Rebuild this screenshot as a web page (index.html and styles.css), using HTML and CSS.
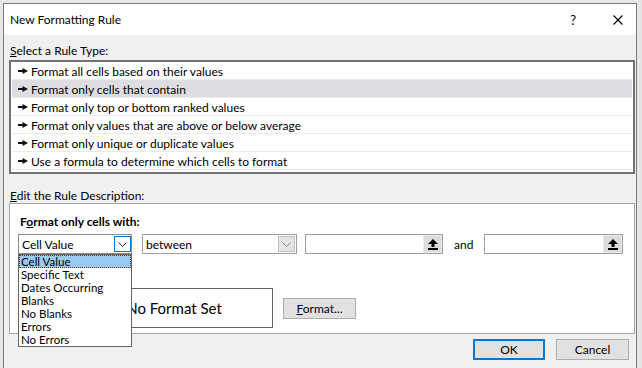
FILE: index.html
```html
<!DOCTYPE html>
<html lang="en">
<head>
  <meta charset="UTF-8" />
  <title>New Formatting Rule</title>
  <link rel="stylesheet" href="styles.css">
</head>
<body>
  <div class="dialog">
    <div class="titlebar">
      <span class="title">New Formatting Rule</span>
      <span class="help">?</span>
      <svg class="close" width="10" height="10" viewBox="0 0 10 10"><path d="M0.5 0.5l9 9M9.5 0.5l-9 9" stroke="#000" stroke-width="1.1" fill="none"/></svg>
    </div>

    <div class="content">
      <div class="label"><u>S</u>elect a Rule Type:</div>
      <ul class="rule-list">
        <li><svg class="pointer" width="10" height="6" viewBox="0 0 10 6"><path d="M0 2h5v2H0z M4.5 0l5.5 3-5.5 3z"/></svg>Format all cells based on their values</li>
        <li class="selected"><svg class="pointer" width="10" height="6" viewBox="0 0 10 6"><path d="M0 2h5v2H0z M4.5 0l5.5 3-5.5 3z"/></svg>Format only cells that contain</li>
        <li><svg class="pointer" width="10" height="6" viewBox="0 0 10 6"><path d="M0 2h5v2H0z M4.5 0l5.5 3-5.5 3z"/></svg>Format only top or bottom ranked values</li>
        <li><svg class="pointer" width="10" height="6" viewBox="0 0 10 6"><path d="M0 2h5v2H0z M4.5 0l5.5 3-5.5 3z"/></svg>Format only values that are above or below average</li>
        <li><svg class="pointer" width="10" height="6" viewBox="0 0 10 6"><path d="M0 2h5v2H0z M4.5 0l5.5 3-5.5 3z"/></svg>Format only unique or duplicate values</li>
        <li><svg class="pointer" width="10" height="6" viewBox="0 0 10 6"><path d="M0 2h5v2H0z M4.5 0l5.5 3-5.5 3z"/></svg>Use a formula to determine which cells to format</li>
      </ul>

      <div class="label edit-label"><u>E</u>dit the Rule Description:</div>
      <div class="panel">
        <div class="panel-title">F<u>o</u>rmat only cells with:</div>

        <div class="criteria">
          <div class="combo combo-field">
            <span class="combo-text">Cell Value</span>
            <span class="combo-btn focused">
              <svg width="9" height="5" viewBox="0 0 9 5"><path d="M0.5 0.5l4 4 4-4" fill="none" stroke="#333"/></svg>
            </span>
            <ul class="dropdown">
              <li class="current">Cell Value</li>
              <li>Specific Text</li>
              <li>Dates Occurring</li>
              <li>Blanks</li>
              <li>No Blanks</li>
              <li>Errors</li>
              <li>No Errors</li>
            </ul>
          </div>

          <div class="combo combo-op">
            <span class="combo-text">between</span>
            <span class="combo-btn">
              <svg width="9" height="5" viewBox="0 0 9 5"><path d="M0.5 0.5l4 4 4-4" fill="none" stroke="#8a8a8a"/></svg>
            </span>
          </div>

          <div class="ref-input">
            <span class="ref-btn">
              <svg width="10" height="11" viewBox="0 0 10 11"><path d="M5 0L10 5H6.5V8H3.5V5H0z M0 9h10v2H0z"/></svg>
            </span>
          </div>
          <span class="and">and</span>
          <div class="ref-input ref-second">
            <span class="ref-btn">
              <svg width="10" height="11" viewBox="0 0 10 11"><path d="M5 0L10 5H6.5V8H3.5V5H0z M0 9h10v2H0z"/></svg>
            </span>
          </div>
        </div>

        <div class="preview-row">
          <!-- "Preview:" label sits under the open dropdown -->
          <span class="preview-label"></span>
          <div class="preview-box">No Format Set</div>
          <button class="btn format-btn"><u>F</u>ormat...</button>
        </div>
      </div>

      <div class="actions">
        <button class="btn ok">OK</button>
        <button class="btn cancel">Cancel</button>
      </div>
    </div>
  </div>
</body>
</html>
```

FILE: styles.css
```css
body {
  margin: 0;
  background: #e6e6e6;
  font-family: 'Lato', 'Noto Sans', sans-serif;
  font-size: 12px;
  color: #000;
  overflow: hidden;
}

.dialog {
  margin: 3px 0 0 3px;
  width: 634px;
  height: 380px;
  box-sizing: border-box;
  border: 1px solid #7a7a7a;
  background: #f0f0f0;
}

.titlebar {
  height: 31px;
  display: flex;
  align-items: center;
  padding-left: 6px;
  background: #fff;
}

.title {
  flex: 1;
}

.help {
  margin-right: 37px;
  font-size: 13px;
}

.close {
  margin-right: 13px;
}

.content {
  padding: 0 1px 0 5px;
}

.label {
  line-height: 15px;
  padding-left: 1px;
  margin-top: 8px;
}

.edit-label {
  margin-top: 14px;
}

.rule-list {
  list-style: none;
  margin: 2px 0 0;
  padding: 0 1px 2px;
  border: 2px solid #737373;
  background: #fff;
}

.rule-list li {
  height: 18px;
  box-sizing: border-box;
  border-bottom: 1px solid #ebebeb;
  display: flex;
  align-items: center;
  gap: 3px;
  padding-left: 6px;
  padding-top: 1px;
}

.rule-list li.selected {
  background: #dedee2;
}

.pointer {
  fill: #111;
}

.panel {
  border: 1px solid #a3a3a3;
  background: #fff;
  padding: 10px 8px 5px;
}

.panel-title {
  font-weight: bold;
  line-height: 15px;
  padding-left: 2px;
}

.criteria {
  display: flex;
  align-items: center;
  margin-top: 5px;
  height: 20px;
}

.combo {
  position: relative;
  height: 20px;
  box-sizing: border-box;
  border: 1px solid #a0a0a0;
  background: #fff;
  display: flex;
  align-items: center;
}

.combo-field {
  width: 114px;
  margin-right: 10px;
  border-color: #8c8c8c;
}

.combo-op {
  width: 155px;
  margin-right: 8px;
}

.combo-text {
  flex: 1;
  padding-left: 3px;
}

.combo-btn {
  width: 17px;
  height: 16px;
  box-sizing: border-box;
  margin-right: 1px;
  display: flex;
  align-items: center;
  justify-content: center;
  background: #e5e5e5;
  border: 1px solid #c2c2c2;
}

.combo-field .combo-btn {
  margin-right: 0;
}

.combo-btn.focused {
  background: #fff;
  border-color: #0078d7;
}

.dropdown {
  position: absolute;
  z-index: 10;
  left: -1px;
  top: 19px;
  width: 114px;
  box-sizing: border-box;
  margin: 0;
  padding: 0;
  list-style: none;
  border: 1px solid #646464;
  background: #fff;
  font-size: 11.5px;
}

.dropdown li {
  height: 13px;
  line-height: 13px;
  padding-left: 2px;
}

.dropdown li.current {
  background: #99c9ef;
  outline: 1px dotted #5a3a1e;
  outline-offset: -1px;
}

.ref-input {
  width: 138px;
  height: 20px;
  box-sizing: border-box;
  border: 1px solid #a0a0a0;
  background: #fff;
  display: flex;
  justify-content: flex-end;
}

.ref-second {
  width: 139px;
}

.ref-btn {
  width: 19px;
  display: flex;
  align-items: center;
  justify-content: center;
  background: #dcdcdc;
  box-shadow: inset 0 0 0 1px #ececec;
}

.and {
  width: 20px;
  margin: 0 10px 0 11px;
}

.preview-row {
  display: flex;
  align-items: center;
  margin-top: 34px;
  height: 40px;
}

.preview-label {
  width: 57px;
}

.preview-box {
  width: 198px;
  height: 40px;
  box-sizing: border-box;
  border: 1px solid #646464;
  display: flex;
  align-items: center;
  justify-content: center;
  font-size: 15px;
}

.btn {
  height: 21px;
  box-sizing: border-box;
  background: #e1e1e1;
  border: 1px solid #adadad;
  font-family: inherit;
  font-size: 12px;
  padding: 0;
  color: #000;
}

.format-btn {
  width: 73px;
  margin-left: 10px;
}

.actions {
  display: flex;
  justify-content: flex-end;
  gap: 11px;
  margin-top: 5px;
  padding-right: 6px;
}

.ok {
  width: 72px;
  border: 2px solid #0078d7;
}

.cancel {
  width: 73px;
}
```
